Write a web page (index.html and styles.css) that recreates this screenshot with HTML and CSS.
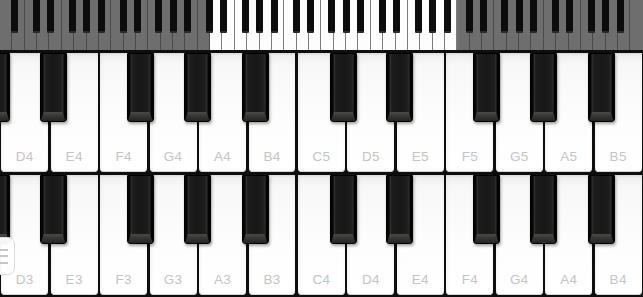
FILE: index.html
```html
<!DOCTYPE html>
<html>
<head>
<meta charset="utf-8">
<link rel="stylesheet" href="styles.css">
</head>
<body>
<div class="app">
  <div class="mini">
    <span class="mk a dim"><span class="blk mb"></span></span><span class="mk dim"></span>
    <span class="mk c dim"><span class="blk mb"></span></span><span class="mk d dim"><span class="blk mb"></span></span><span class="mk dim"></span><span class="mk f dim"><span class="blk mb"></span></span><span class="mk g dim"><span class="blk mb"></span></span><span class="mk a dim"><span class="blk mb"></span></span><span class="mk dim"></span>
    <span class="mk c dim"><span class="blk mb"></span></span><span class="mk d dim"><span class="blk mb"></span></span><span class="mk dim"></span><span class="mk f dim"><span class="blk mb"></span></span><span class="mk g dim"><span class="blk mb"></span></span><span class="mk a dim"><span class="blk mb"></span></span><span class="mk dim"></span>
    <span class="mk c dim"><span class="blk mb"></span></span><span class="mk d"><span class="blk mb"></span></span><span class="mk"></span><span class="mk f"><span class="blk mb"></span></span><span class="mk g"><span class="blk mb"></span></span><span class="mk a"><span class="blk mb"></span></span><span class="mk"></span>
    <span class="mk c"><span class="blk mb"></span></span><span class="mk d"><span class="blk mb"></span></span><span class="mk"></span><span class="mk f"><span class="blk mb"></span></span><span class="mk g"><span class="blk mb"></span></span><span class="mk a"><span class="blk mb"></span></span><span class="mk"></span>
    <span class="mk c"><span class="blk mb"></span></span><span class="mk d"><span class="blk mb"></span></span><span class="mk"></span><span class="mk f"><span class="blk mb"></span></span><span class="mk g"><span class="blk mb"></span></span><span class="mk a"><span class="blk mb"></span></span><span class="mk"></span>
    <span class="mk c dim"><span class="blk mb"></span></span><span class="mk d dim"><span class="blk mb"></span></span><span class="mk dim"></span><span class="mk f dim"><span class="blk mb"></span></span><span class="mk g dim"><span class="blk mb"></span></span><span class="mk a dim"><span class="blk mb"></span></span><span class="mk dim"></span>
    <span class="mk c dim"><span class="blk mb"></span></span><span class="mk d dim"><span class="blk mb"></span></span><span class="mk dim"></span><span class="mk f dim"><span class="blk mb"></span></span><span class="mk g dim"><span class="blk mb"></span></span><span class="mk a dim"><span class="blk mb"></span></span><span class="mk dim"></span>
    <span class="mk dim last"></span>
  </div>

  <div class="board">
    <div class="row row1">
      <div class="wk c off"><span class="blk bk"><span class="bevel"></span></span></div>
      <div class="wk d"><span class="lbl">D4</span><span class="blk bk"><span class="bevel"></span></span></div>
      <div class="wk"><span class="lbl">E4</span></div>
      <div class="wk f"><span class="lbl">F4</span><span class="blk bk"><span class="bevel"></span></span></div>
      <div class="wk g"><span class="lbl">G4</span><span class="blk bk"><span class="bevel"></span></span></div>
      <div class="wk a"><span class="lbl">A4</span><span class="blk bk"><span class="bevel"></span></span></div>
      <div class="wk"><span class="lbl">B4</span></div>
      <div class="wk c"><span class="lbl">C5</span><span class="blk bk"><span class="bevel"></span></span></div>
      <div class="wk d"><span class="lbl">D5</span><span class="blk bk"><span class="bevel"></span></span></div>
      <div class="wk"><span class="lbl">E5</span></div>
      <div class="wk f"><span class="lbl">F5</span><span class="blk bk"><span class="bevel"></span></span></div>
      <div class="wk g"><span class="lbl">G5</span><span class="blk bk"><span class="bevel"></span></span></div>
      <div class="wk a"><span class="lbl">A5</span><span class="blk bk"><span class="bevel"></span></span></div>
      <div class="wk"><span class="lbl">B5</span></div>
    </div>
    <div class="row row2">
      <div class="wk c off"><span class="blk bk"><span class="bevel"></span></span></div>
      <div class="wk d"><span class="lbl">D3</span><span class="blk bk"><span class="bevel"></span></span></div>
      <div class="wk"><span class="lbl">E3</span></div>
      <div class="wk f"><span class="lbl">F3</span><span class="blk bk"><span class="bevel"></span></span></div>
      <div class="wk g"><span class="lbl">G3</span><span class="blk bk"><span class="bevel"></span></span></div>
      <div class="wk a"><span class="lbl">A3</span><span class="blk bk"><span class="bevel"></span></span></div>
      <div class="wk"><span class="lbl">B3</span></div>
      <div class="wk c"><span class="lbl">C4</span><span class="blk bk"><span class="bevel"></span></span></div>
      <div class="wk d"><span class="lbl">D4</span><span class="blk bk"><span class="bevel"></span></span></div>
      <div class="wk"><span class="lbl">E4</span></div>
      <div class="wk f"><span class="lbl">F4</span><span class="blk bk"><span class="bevel"></span></span></div>
      <div class="wk g"><span class="lbl">G4</span><span class="blk bk"><span class="bevel"></span></span></div>
      <div class="wk a"><span class="lbl">A4</span><span class="blk bk"><span class="bevel"></span></span></div>
      <div class="wk"><span class="lbl">B4</span></div>
    </div>
  </div>

  <button class="menu" aria-label="Menu"><span></span><span></span><span></span></button>
</div>
</body>
</html>
```

FILE: styles.css
```css
* { box-sizing: border-box; }
html, body {
  margin: 0;
  padding: 0;
  width: 643px;
  height: 297px;
  overflow: hidden;
  background: #101010;
  font-family: "Liberation Sans", Arial, sans-serif;
}
.app {
  position: relative;
  width: 643px;
  height: 297px;
  display: flex;
  flex-direction: column;
}

/* ---------- overview strip ---------- */
.mini {
  height: 50px;
  display: flex;
  background: #101010;
}
.mk {
  position: relative;
  flex: 0 0 calc(100% / 52);
  height: 50px;
  background: #fdfdfd;
  box-shadow: inset -1px 0 0 #7d7d7d;
}
.mk.dim {
  background: #6e6e6e;
  box-shadow: inset -1px 0 0 #4a4a4a;
}
.mk.last { box-shadow: none; }
.blk { position: absolute; top: 0; z-index: 2; }
.mb {
  width: 57%;
  height: 33px;
  background: #0c0c0c;
  border-bottom: 2px solid #2a2a2a;
  border-radius: 0 0 1px 1px;
}
.c > .blk { left: 68%; }
.d > .blk { left: 82%; }
.f > .blk { left: 57%; }
.g > .blk { left: 73%; }
.a > .blk { left: 91%; }

/* ---------- main keyboard ---------- */
.board {
  flex: 1;
  display: flex;
  flex-direction: column;
  gap: 3px;
  padding: 3px 0 2px;
  background: #0e0e0e;
}
.row {
  display: flex;
  overflow: hidden;
}
.row1 { height: 119px; }
.row2 { height: 120px; }
.wk {
  position: relative;
  flex: 0 0 calc(100% / 13 - 2.5px);
  margin: 0 1.25px;
  height: 100%;
  border-radius: 0 0 4px 4px;
  background: linear-gradient(to bottom, #dedede 0, #f0f0f0 3px, #f8f8f8 12px, #fdfdfd 60%, #ffffff 100%);
  box-shadow: inset 2px 0 3px rgba(0, 0, 0, 0.04), inset -1px 0 2px rgba(0, 0, 0, 0.03), inset 0 -1px 0 #dadada;
  display: flex;
  align-items: flex-end;
  justify-content: center;
  padding-bottom: 7px;
}
.wk.off { margin-left: calc(1.25px - 100% / 13); }
.lbl {
  font-size: 13.5px;
  line-height: 16px;
  color: #c4c4c4;
  letter-spacing: 0.3px;
}
.bk {
  width: 57%;
  height: 69px;
  border: 1px solid #000;
  border-radius: 0 0 3px 3px;
  background:
    linear-gradient(to right, #050505 0, #050505 2px, #2e2e2e 3px, #1d1d1d 5px, #181818 50%, #1d1d1d calc(100% - 5px), #2e2e2e calc(100% - 3px), #050505 calc(100% - 2px));
  box-shadow: 1px 2px 3px rgba(0, 0, 0, 0.35);
  overflow: hidden;
}
.bevel {
  position: absolute;
  left: 0;
  right: 0;
  bottom: 0;
  height: 9px;
  background: linear-gradient(to bottom, #4a4a48 0, #383836 40%, #242424 100%);
  clip-path: polygon(3px 0, calc(100% - 3px) 0, 100% 100%, 0 100%);
}

/* ---------- menu button ---------- */
.menu {
  position: absolute;
  left: -22px;
  top: 237px;
  width: 37px;
  height: 38px;
  padding: 0 6px 0 0;
  margin: 0;
  border: 1px solid #dcdcdc;
  border-radius: 7px;
  background: rgba(255, 255, 255, 0.96);
  display: flex;
  flex-direction: column;
  align-items: flex-end;
  justify-content: center;
  gap: 4.5px;
  z-index: 5;
}
.menu span {
  display: block;
  width: 12px;
  height: 2px;
  background: #c6c6c6;
}
```
